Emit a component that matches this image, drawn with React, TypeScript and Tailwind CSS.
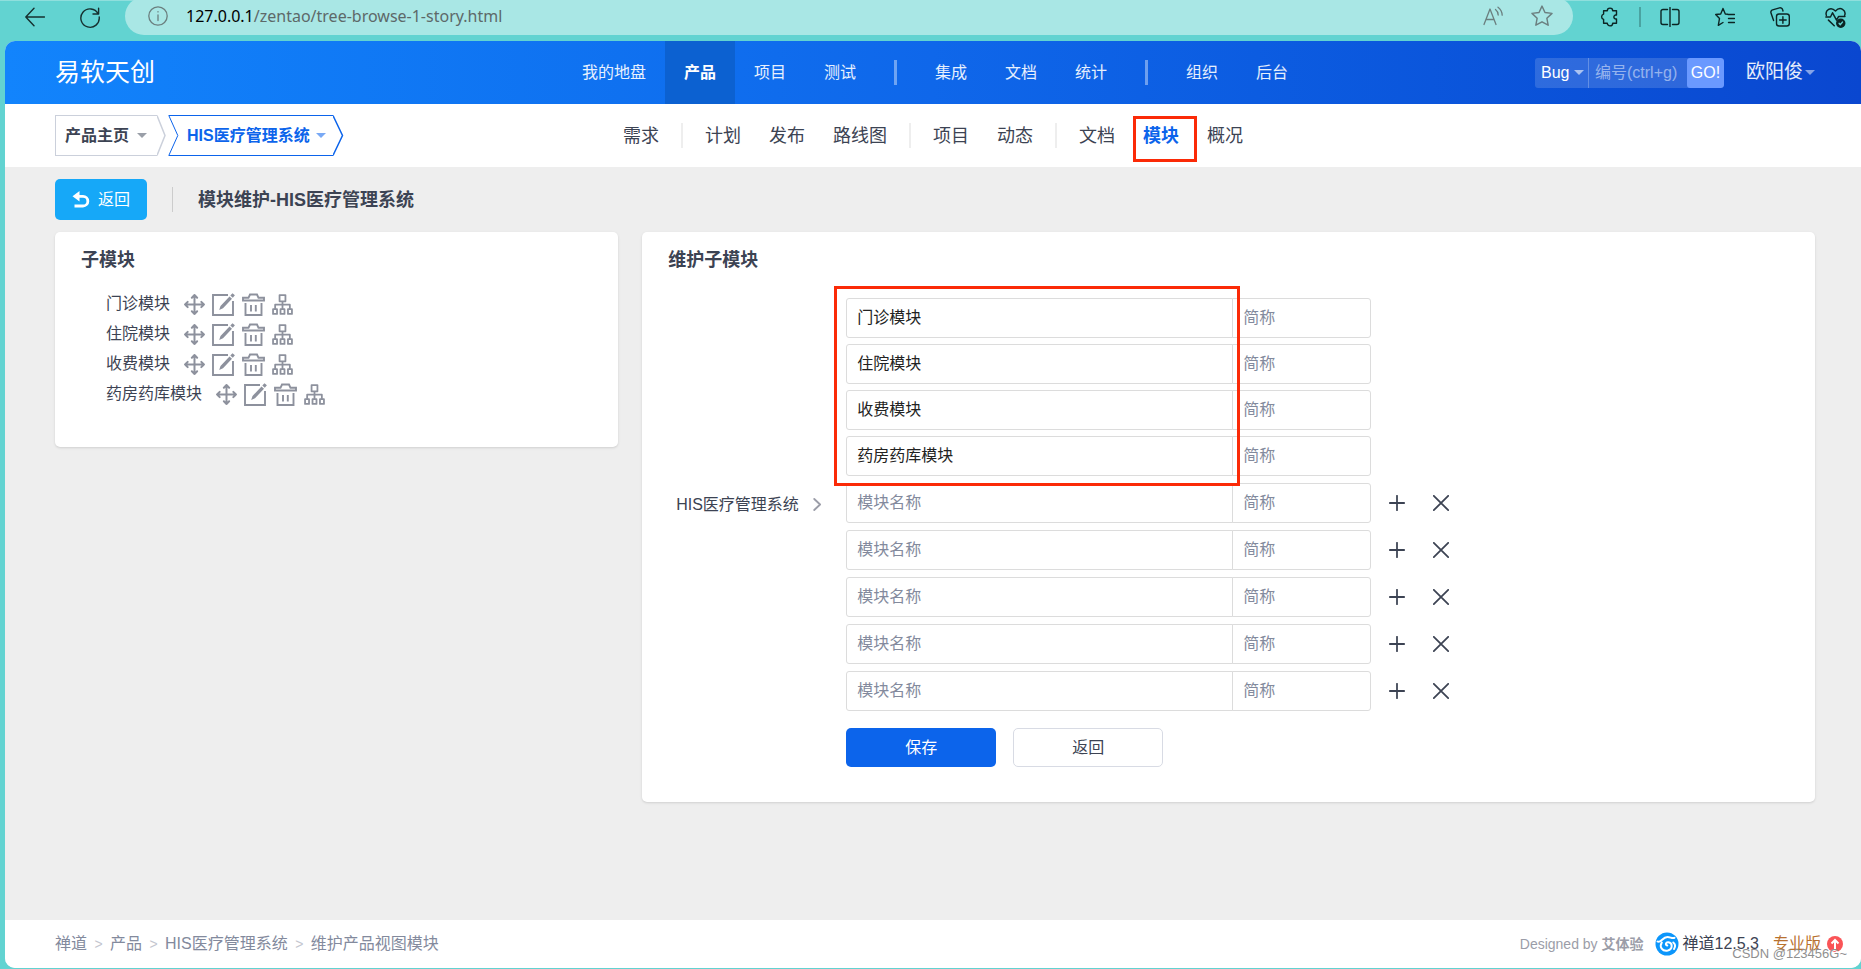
import type { ReactNode } from "react"

const mainNav = [["我的地盘", "产品", "项目", "测试"], ["集成", "文档", "统计"], ["组织", "后台"]]
const subNav = [["需求"], ["计划", "发布", "路线图"], ["项目", "动态"], ["文档", "模块", "概况"]]
const modules = ["门诊模块", "住院模块", "收费模块", "药房药库模块"]
const emptyRows = [1, 2, 3, 4, 5]
const crumbs = ["禅道", "产品", "HIS医疗管理系统", "维护产品视图模块"]

function Line({ children, className = "size-5", width = 1.4 }: { children: ReactNode; className?: string; width?: number }) {
  return (
    <svg
      viewBox="0 0 20 20"
      className={`shrink-0 ${className}`}
      fill="none"
      stroke="currentColor"
      strokeWidth={width}
      strokeLinecap="round"
      strokeLinejoin="round"
      aria-hidden="true"
    >
      {children}
    </svg>
  )
}

function Caret({ className }: { className: string }) {
  return (
    <svg viewBox="0 0 10 5" className={`h-[5px] w-[10px] shrink-0 ${className}`} fill="currentColor" aria-hidden="true">
      <path d="M0 0h10L5 5z" />
    </svg>
  )
}

function BrowserBar() {
  return (
    <div className="flex h-[41px] items-start border-t border-[#8fdfdd] pr-[15px] pl-[25px] text-[#16302f]">
      <div className="flex h-8 items-center gap-[35px]">
        <button aria-label="后退">
          <Line>
            <path d="M19.5 10H.8M9 1.2.8 10 9 18.8" />
          </Line>
        </button>
        <button aria-label="刷新">
          <Line className="h-6 w-5">
            <path d="M18.2 6.8A9.2 9.2 0 1 0 19.2 10M18.6 1.2v5.8h-5.6" />
          </Line>
        </button>
      </div>
      <div className="-mt-1 ml-[25px] flex h-[38px] flex-1 items-center rounded-full bg-[#a9e7e5] pr-5 pl-[23px] text-[#6b7f7f]">
        <Line width={1.3}>
          <circle cx="10" cy="10" r="9.2" />
          <path d="M10 9v5.5M10 5.6v.3" />
        </Line>
        <div className="ml-[18px] flex-1 font-['Noto_Sans',sans-serif] text-base text-[#5d6969]">
          <span className="text-black">127.0.0.1</span>/zentao/tree-browse-1-story.html
        </div>
        <button aria-label="朗读此页内容">
          <Line width={1.3}>
            <path d="M1 18.5 7 3l6 15.500M3.200 13.500h7.600M12.500 3.500q2.600 2 2.700 5.500M15 1.200q4 3 4.200 8" />
          </Line>
        </button>
        <button aria-label="添加收藏" className="ml-7">
          <Line className="size-[22px]" width={1.3}>
            <path d="m10 1 2.700 5.800 6.400.8-4.700 4.400 1.200 6.400L10 15.300l-5.600 3.100 1.200-6.400L.9 7.600l6.400-.8z" />
          </Line>
        </button>
      </div>
      <div className="ml-[27px] flex h-8 items-center text-[#0c2524]">
        <button aria-label="扩展">
          <Line>
            <path d="M7.300 3.800a2.700 2.700 0 0 1 5.400 0h3.800v4.300c-3.500-.8-3.500 4.600 0 3.800v4.300h-3.800a2.700 2.700 0 0 1-5.400 0H3.600v-3.900a2.700 2.700 0 0 1 0-5.200V3.800z" />
          </Line>
        </button>
        <span className="mx-[19px] h-5 w-[2px] bg-[#4aa3a1]" />
        <button aria-label="分屏">
          <Line>
            <path d="M7.500 2.500H3a2 2 0 0 0-2 2v11a2 2 0 0 0 2 2h4.500M12.500 2.500H17a2 2 0 0 1 2 2v11a2 2 0 0 1-2 2h-4.500M10 .6v18.800" />
          </Line>
        </button>
        <button aria-label="收藏夹" className="ml-[35px]">
          <Line>
            <path d="M12.800 7.300 10.300 7 8 1.500 5.700 7 .7 7.500l3.800 4-1.200 6.800L8 15.500M13 7.500h6.500M13.500 11.500h6M13.500 15.500h6" />
          </Line>
        </button>
        <button aria-label="集锦" className="ml-[35px]">
          <Line>
            <rect x="6.500" y="7" width="12.800" height="12" rx="2.500" />
            <path d="M12.900 9.700v6.600M9.600 13h6.600M3.600 13.500 1 6a2.500 2.500 0 0 1 1.600-3.200L9.500.9a2.500 2.500 0 0 1 3.100 1.700l.4 1.400" />
          </Line>
        </button>
        <button aria-label="浏览器概要" className="ml-[35px]">
          <Line className="size-[21px]">
            <path d="M1.300 8C-.2 3 5.500-1 10 3.800 14.500-1 20.500 3 18.700 8M.8 9.500h4.400l2-4 3.800 7 2-3.500h6M3.300 12.500l5.500 5.300" />
            <circle cx="15" cy="15.500" r="3.800" fill="currentColor" />
            <path d="m13.500 15.600 1.100 1.200 2-2.400" stroke="#62d3d1" />
          </Line>
        </button>
      </div>
    </div>
  )
}

function Header() {
  return (
    <header className="flex h-[63px] items-center bg-linear-to-r from-[#1284fc] via-[#0f67ea] to-[#0a47d0] pr-[46px] pl-[50px] text-white">
      <div className="flex-1 text-[25px]">易软天创</div>
      <nav className="flex h-full items-center text-base text-white/90" aria-label="主导航">
        {mainNav.map((group, i) => (
          <div key={i} className="flex h-full items-center">
            {i > 0 && <span className="mx-[19px] h-[25px] w-[3px] bg-white/40" />}
            {group.map((item) => (
              <a
                key={item}
                href="#"
                className={
                  item === "产品"
                    ? "flex h-full items-center bg-[#0c61d1] px-[19px] font-bold text-white"
                    : "flex h-full items-center px-[19px]"
                }
              >
                {item}
              </a>
            ))}
          </div>
        ))}
      </nav>
      <div className="flex flex-1 items-center justify-end">
        <form className="flex h-[30px] overflow-hidden rounded-[3px] bg-white/15 text-base">
          <div className="relative flex w-[54px] items-center border-r border-white/25">
            <select aria-label="搜索类型" className="w-full appearance-none pl-[6px]">
              <option>Bug</option>
            </select>
            <Caret className="pointer-events-none absolute right-1 text-white/60" />
          </div>
          <input
            aria-label="编号"
            placeholder="编号(ctrl+g)"
            className="w-[98px] pl-[6px] placeholder:text-white/50"
          />
          <button type="button" className="w-[37px] rounded-[3px] bg-[#6a99ff]">
            GO!
          </button>
        </form>
        <button className="ml-[22px] flex items-center text-[19px] text-white/90">
          欧阳俊
          <Caret className="ml-[2px] text-white/50" />
        </button>
      </div>
    </header>
  )
}

function SubHeader() {
  return (
    <div className="flex h-[63px] items-center bg-white px-[50px]">
      <div className="flex flex-1 items-center font-bold">
        <button className="flex h-[41px] items-center border border-r-0 border-[#cbd0db] pl-[9px] text-base text-[#3c4353]">
          产品主页
          <Caret className="mr-[10px] ml-2 text-[#9a9fa8]" />
        </button>
        <svg viewBox="0 0 9 41" className="h-[41px] w-[9px]" fill="none" stroke="#cbd0db" strokeWidth="1.5" aria-hidden="true">
          <path d="M0 .5l8 20-8 20" />
        </svg>
        <svg viewBox="0 0 11 41" className="ml-[2px] h-[41px] w-[11px]" fill="none" stroke="#0c64eb" aria-hidden="true">
          <path d="M11 .5H.8l9 20-9 20H11" />
        </svg>
        <button className="flex h-[41px] items-center border-y border-[#0c64eb] pl-2 text-base text-[#0c64eb]">
          HIS医疗管理系统
          <Caret className="mr-[7px] ml-[6px] text-[#79a9f5]" />
        </button>
        <svg viewBox="0 0 11 41" className="h-[41px] w-[11px]" fill="none" stroke="#0c64eb" strokeWidth="1.500" aria-hidden="true">
          <path d="M0 .5l9.500 20-9.500 20" />
        </svg>
      </div>
      <nav className="flex items-center text-lg text-[#3c4353]" aria-label="产品导航">
        {subNav.map((group, i) => (
          <div key={i} className="flex items-center">
            {i > 0 && <span className="mx-2 h-[25px] w-[2px] bg-[#eee]" />}
            {group.map((item) =>
              item === "模块" ? (
                <a key={item} href="#" aria-current="page" className="relative px-[14px] font-bold text-[#0c64eb]">
                  {item}
                  <span className="absolute -top-1.5 -right-1 left-1 h-[46px] border-3 border-[#fb2a07]" />
                </a>
              ) : (
                <a key={item} href="#" className="px-[14px]">
                  {item}
                </a>
              ),
            )}
          </div>
        ))}
      </nav>
      <div className="flex-1" />
    </div>
  )
}

function TreeActions() {
  return (
    <div className="ml-[14px] flex items-center gap-[7px] text-[#8d919d]">
      <button aria-label="排序">
        <Line className="size-[21px]" width={1.9}>
          <path d="M10 1v18M1 10h18M7.500 3.500 10 1l2.500 2.500M7.500 16.500 10 19l2.500-2.500M3.500 7.500 1 10l2.500 2.500M16.500 7.500 19 10l-2.500 2.500" />
        </Line>
      </button>
      <button aria-label="编辑">
        <svg viewBox="0 0 23 23" className="size-[23px]" aria-hidden="true">
          <path d="M16 2H1v20h20V8" fill="none" stroke="currentColor" strokeWidth="1.900" />
          <path d="M18.300 2.600 20.500.2l2.400 2-2.100 2.500zM17.500 3.600 20 5.700l-9 9.600-3.800 1.700 1.300-4z" fill="currentColor" />
        </svg>
      </button>
      <button aria-label="删除">
        <svg viewBox="0 0 23 23" className="size-[23px]" fill="none" stroke="currentColor" strokeWidth="1.900" aria-hidden="true">
          <path d="M1 7.500V4.800h5.500L8 1.500h7l1.500 3.300H22v2.700zM3.500 10v12h16V10M9 12v6.500M13.800 12v6.500" />
        </svg>
      </button>
      <button aria-label="子模块">
        <Line className="size-[21px]" width={1.700}>
          <path d="M7.200 1h5.600v6H7.200zM10 7v7M3 14v-3.800h14V14M1 14.500h3.800V19H1zM8.100 14.500h3.800V19H8.100zM15.200 14.500H19V19h-3.800z" />
        </Line>
      </button>
    </div>
  )
}

function ModuleRow({ value }: { value?: string }) {
  return (
    <div className="flex h-10">
      <input
        aria-label="模块名称"
        placeholder="模块名称"
        defaultValue={value}
        className="w-[387px] rounded-l-[3px] border border-[#dcdcdc] px-[10px] text-[#222] placeholder:text-[#838a9d]"
      />
      <input
        aria-label="简称"
        placeholder="简称"
        className="-ml-px w-[139px] rounded-r-[3px] border border-[#dcdcdc] px-[10px] placeholder:text-[#838a9d]"
      />
      {value === undefined && (
        <div className="ml-[18px] flex items-center gap-7 text-[#3c4353]">
          <button type="button" aria-label="添加">
            <Line className="size-4" width={2.2}>
              <path d="M10 1v18M1 10h18" />
            </Line>
          </button>
          <button type="button" aria-label="移除">
            <Line className="size-4" width={2.2}>
              <path d="m1 1 18 18M19 1 1 19" />
            </Line>
          </button>
        </div>
      )}
    </div>
  )
}

function Footer() {
  return (
    <footer className="flex h-12 items-center bg-white pr-[18px] pl-[50px] text-base">
      <nav className="flex flex-1 items-center text-[#838a9d]" aria-label="面包屑">
        {crumbs.map((crumb, i) => (
          <span key={crumb} className="flex items-center">
            {i > 0 && <span className="w-[23px] text-center text-sm text-[#c4c6cf]">&gt;</span>}
            <a href="#">{crumb}</a>
          </span>
        ))}
      </nav>
      <div className="relative flex items-center">
        <span className="text-sm text-[#9b9da8]">
          Designed by <b>艾体验</b>
        </span>
        <a href="#" className="ml-3 flex items-center gap-[3px] text-[#3c4353]">
          <svg viewBox="0 0 24 24" className="size-6" aria-hidden="true">
            <circle cx="12" cy="12" r="11.500" fill="#0c96fb" />
            <path
              d="M2.500 9.500C5.500 11.500 7.500 5 12.500 5c3 0 4.500 2 7 .8M12.300 13.500c-2.300-.8-1.600-3.500 1-3.300 4.500.4 4.700 7-.5 8.300-5.500 1-8.800-3.500-6-8M18.300 10.500c2 1.700 2 4.500.7 6.500"
              fill="none"
              stroke="#fff"
              strokeWidth="2"
              strokeLinecap="round"
            />
          </svg>
          禅道12.5.3
        </a>
        <a href="#" className="ml-[14px] flex items-center gap-[6px] text-[#b8712f]">
          专业版
          <svg viewBox="0 0 16 16" className="size-4" aria-hidden="true">
            <circle cx="8" cy="8" r="8" fill="#fa5457" />
            <path d="M8 13V4M4.500 7.500 8 4l3.500 3.500" fill="none" stroke="#fff" strokeWidth="2" />
          </svg>
        </a>
        <span className="absolute top-3 -right-1 text-[13px] whitespace-nowrap text-[#8f8f8f] text-shadow-2xs text-shadow-white">
          CSDN @123456G~
        </span>
      </div>
    </footer>
  )
}

export default function App() {
  return (
    <div className="flex min-h-screen flex-col bg-[#62d3d1] pb-px font-['Liberation_Sans','Noto_Sans_CJK_SC',sans-serif] text-base">
      <BrowserBar />
      <div className="ml-[5px] flex flex-1 flex-col overflow-hidden rounded-[10px] bg-[#eee]">
        <Header />
        <SubHeader />
        <main className="flex-1 px-[50px] pr-[46px]">
          <div className="flex h-[65px] items-center">
            <button className="flex h-[41px] items-center gap-2 rounded-[5px] bg-[#16a8f8] px-[17px] text-base text-white">
              <svg viewBox="0 0 18 18" className="size-[18px]" aria-hidden="true">
                <path d="M7.500 0v10.500L.5 5.300z" fill="currentColor" />
                <path d="M6 5.300h5a4.800 4.800 0 0 1 0 9.700H2.500" fill="none" stroke="currentColor" strokeWidth="2.800" />
              </svg>
              返回
            </button>
            <span className="mx-[25px] h-[25px] w-px bg-[#ccc]" />
            <h1 className="text-lg font-bold text-[#3c4353]">模块维护-HIS医疗管理系统</h1>
          </div>
          <div className="flex items-start gap-6">
            <section className="w-[32%] rounded-[5px] bg-white px-[26px] pt-[14px] pb-[38px] shadow-sm">
              <h2 className="text-lg font-bold text-[#3c4353]">子模块</h2>
              <ul className="mt-[15px] pl-[25px] text-base text-[#3c4353]">
                {modules.map((name) => (
                  <li key={name} className="flex h-[30px] items-center">
                    <a href="#">{name}</a>
                    <TreeActions />
                  </li>
                ))}
              </ul>
            </section>
            <section className="flex-1 rounded-[5px] bg-white px-[26px] pt-[14px] pb-[35px] shadow-sm">
              <h2 className="text-lg font-bold text-[#3c4353]">维护子模块</h2>
              <form className="mt-6">
                <div className="flex items-center">
                  <div className="flex w-[178px] shrink-0 items-center pl-2 text-[#3c4353]">
                    HIS医疗管理系统
                    <Line className="ml-3 size-[13px] text-[#9b9da8]" width={2.800}>
                      <path d="m5 1.500 9 8.500-9 8.500" />
                    </Line>
                  </div>
                  <div className="flex flex-col gap-[7px]">
                    <div className="relative flex flex-col gap-[6px]">
                      {modules.map((name) => (
                        <ModuleRow key={name} value={name} />
                      ))}
                      <div className="pointer-events-none absolute -top-3 -bottom-[10px] -left-3 w-[406px] border-3 border-[#fb2a07]" />
                    </div>
                    {emptyRows.map((row) => (
                      <ModuleRow key={row} />
                    ))}
                  </div>
                </div>
                <div className="mt-[17px] ml-[178px] flex gap-[17px]">
                  <button type="button" className="h-[39px] w-[150px] rounded-[5px] bg-[#0c64eb] text-white">
                    保存
                  </button>
                  <button type="button" className="h-[39px] w-[150px] rounded-[5px] border border-[#d8dbe4] text-[#3c4353]">
                    返回
                  </button>
                </div>
              </form>
            </section>
          </div>
        </main>
        <Footer />
      </div>
    </div>
  )
}
